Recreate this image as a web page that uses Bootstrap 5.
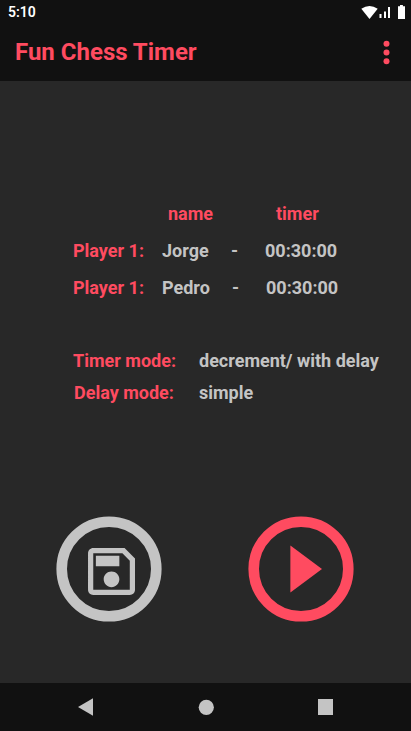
<!DOCTYPE html>
<html lang="en">
<head>
<meta charset="utf-8">
<meta name="viewport" content="width=device-width, initial-scale=1">
<title>Fun Chess Timer</title>
<link href="https://cdn.jsdelivr.net/npm/bootstrap@5.3.0/dist/css/bootstrap.min.css" rel="stylesheet">
<style>
  body { background: #282828; color: #c4c4c4; font-family: Roboto, "Liberation Sans", sans-serif; font-weight: 700; }
  .accent { color: #ff4b60; }
  .bar-dark { background: #111; }
  .app-head { height: 81px; }
  .status { height: 24px; padding: 0 5px 0 8px; font-size: 14px; line-height: 24px; font-weight: 600; }
  .app-title { font-size: 24px; line-height: 56px; font-weight: 700; }
  .title-row { height: 56px; padding: 0 21px 0 15px; }
  .info { font-size: 18px; line-height: 24px; white-space: nowrap; }
  .players { padding: 121px 0 0 73px; }
  .p-row { display: grid; grid-template-columns: 89px 69px 34px 1fr; height: 37px; }
  .modes { padding: 36px 0 0 73px; }
  .m-row { display: grid; grid-template-columns: 126px 1fr; height: 32px; }
  .nudge { padding-left: 1px; }
  .h-name { padding-left: 6px; }
  .h-timer { padding-left: 11px; }
  .actions { padding: 0 57px 61px 56px; }
  .round-btn { width: 106px; height: 106px; }
  .sys-nav { height: 48px; padding: 0 77px 0 77px; }
</style>
</head>
<body>
<div class="d-flex flex-column vh-100 overflow-hidden">
  <header class="bar-dark app-head flex-shrink-0">
    <div class="status d-flex justify-content-between text-white">
      <span>5:10</span>
      <svg width="46" height="24" viewBox="360 0 46 24" fill="#fff" aria-hidden="true">
        <path d="M361.300 8.800Q369.500 3.200 377.700 8.800L369.500 19Z"/>
        <path d="M379.500 14h2v4h-2zM384 11.500h2v6.500h-2zM388 7h2v11h-2z"/>
        <path d="M400 5h2.900v1.200h2.100v12.800h-7V6.200h2z"/>
      </svg>
    </div>
    <div class="title-row d-flex align-items-center justify-content-between accent">
      <h1 class="app-title m-0">Fun Chess Timer</h1>
      <button class="btn p-0 border-0 d-flex accent" aria-label="Menu">
        <svg width="7" height="25" viewBox="0 0 7 25" fill="currentColor"><circle cx="3.500" cy="3.700" r="3"/><circle cx="3.500" cy="12.500" r="3"/><circle cx="3.500" cy="21.200" r="3"/></svg>
      </button>
    </div>
  </header>

  <main class="flex-grow-1 d-flex flex-column info">
    <section class="players">
      <div class="p-row accent"><span></span><span class="h-name">name</span><span></span><span class="h-timer">timer</span></div>
      <div class="p-row"><span class="accent">Player 1:</span><span>Jorge</span><span>-</span><span>00:30:00</span></div>
      <div class="p-row"><span class="accent">Player 1:</span><span>Pedro</span><span class="nudge">-</span><span class="nudge">00:30:00</span></div>
    </section>
    <section class="modes">
      <div class="m-row"><span class="accent">Timer mode:</span><span>decrement/ with delay</span></div>
      <div class="m-row"><span class="accent nudge">Delay mode:</span><span>simple</span></div>
    </section>
    <div class="actions d-flex justify-content-between mt-auto">
      <button class="btn p-0 border-0 round-btn d-flex" aria-label="Save">
        <svg width="106" height="106" viewBox="56 516 106 106">
          <circle cx="109" cy="569" r="47.300" fill="none" stroke="#c4c4c4" stroke-width="10.600"/>
          <path transform="translate(80.200 540.200) scale(2.610)" fill="#c4c4c4" d="M17 3H5c-1.110 0-2 .9-2 2v14c0 1.100.89 2 2 2h14c1.100 0 2-.9 2-2V7l-4-4zm2 16H5V5h11.170L19 7.830V19zm-7-7c-1.660 0-3 1.340-3 3s1.340 3 3 3 3-1.340 3-3-1.340-3-3-3zM6 6h9v4H6z"/>
        </svg>
      </button>
      <button class="btn p-0 border-0 round-btn d-flex" aria-label="Play">
        <svg width="106" height="106" viewBox="248 516 106 106">
          <circle cx="301" cy="569" r="47.300" fill="none" stroke="#ff4b60" stroke-width="10.600"/>
          <path fill="#ff4b60" d="M290.400 545.400v47L322 569z"/>
        </svg>
      </button>
    </div>
  </main>

  <nav class="bar-dark sys-nav flex-shrink-0 d-flex align-items-center justify-content-between">
    <svg width="17" height="18" viewBox="77 698 17 18" fill="#c4c4c4"><path d="M93 698.300v17.400L78 707z"/></svg>
    <svg width="17" height="18" viewBox="197 698 17 18" fill="#c4c4c4"><circle cx="206.300" cy="707.300" r="7.600"/></svg>
    <svg width="17" height="18" viewBox="317 698 17 18" fill="#c4c4c4"><path d="M318 699h15v16h-15z"/></svg>
  </nav>
</div>
<script src="https://cdn.jsdelivr.net/npm/bootstrap@5.3.0/dist/js/bootstrap.bundle.min.js"></script>
</body>
</html>
